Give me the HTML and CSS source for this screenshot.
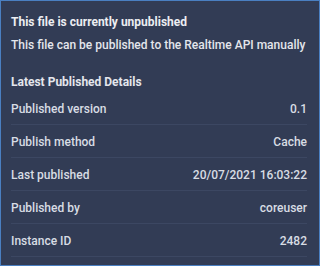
FILE: index.html
```html
<!DOCTYPE html>
<html>
<head>
<meta charset="utf-8">
<link rel="stylesheet" href="styles.css">
</head>
<body>
<div class="panel">
  <div class="title">This file is currently unpublished</div>
  <div class="desc">This file can be published to the Realtime API manually</div>
  <div class="section">Latest Published Details</div>
  <div class="rows">
    <div class="row"><span>Published version</span><span>0.1</span></div>
    <div class="row"><span>Publish method</span><span>Cache</span></div>
    <div class="row"><span>Last published</span><span>20/07/2021 16:03:22</span></div>
    <div class="row"><span>Published by</span><span>coreuser</span></div>
    <div class="row"><span>Instance ID</span><span>2482</span></div>
  </div>
</div>
</body>
</html>
```
FILE: styles.css
```css
html, body { margin: 0; padding: 0; background: #323c55; }
.panel {
  box-sizing: border-box;
  width: 320px;
  height: 266px;
  border: 1px solid #4a7fc1;
  background: #323c55;
  padding: 13px 12px 0 10px;
  font-family: Roboto, "Liberation Sans", sans-serif;
  font-size: 12px;
  line-height: 16px;
  font-weight: 500;
  color: #dfe2e8;
}
.title { font-weight: 700; color: #eceef2; }
.desc { margin-top: 7px; color: #e4e6ec; }
.section { margin-top: 21px; font-weight: 700; color: #e4e6ec; }
.rows { margin-top: 2px; }
.row {
  display: flex;
  justify-content: space-between;
  align-items: center;
  height: 33px;
  padding-top: 1px;
  box-sizing: border-box;
  border-bottom: 1px solid #3c4762;
  color: #d8dce4;
}
```
